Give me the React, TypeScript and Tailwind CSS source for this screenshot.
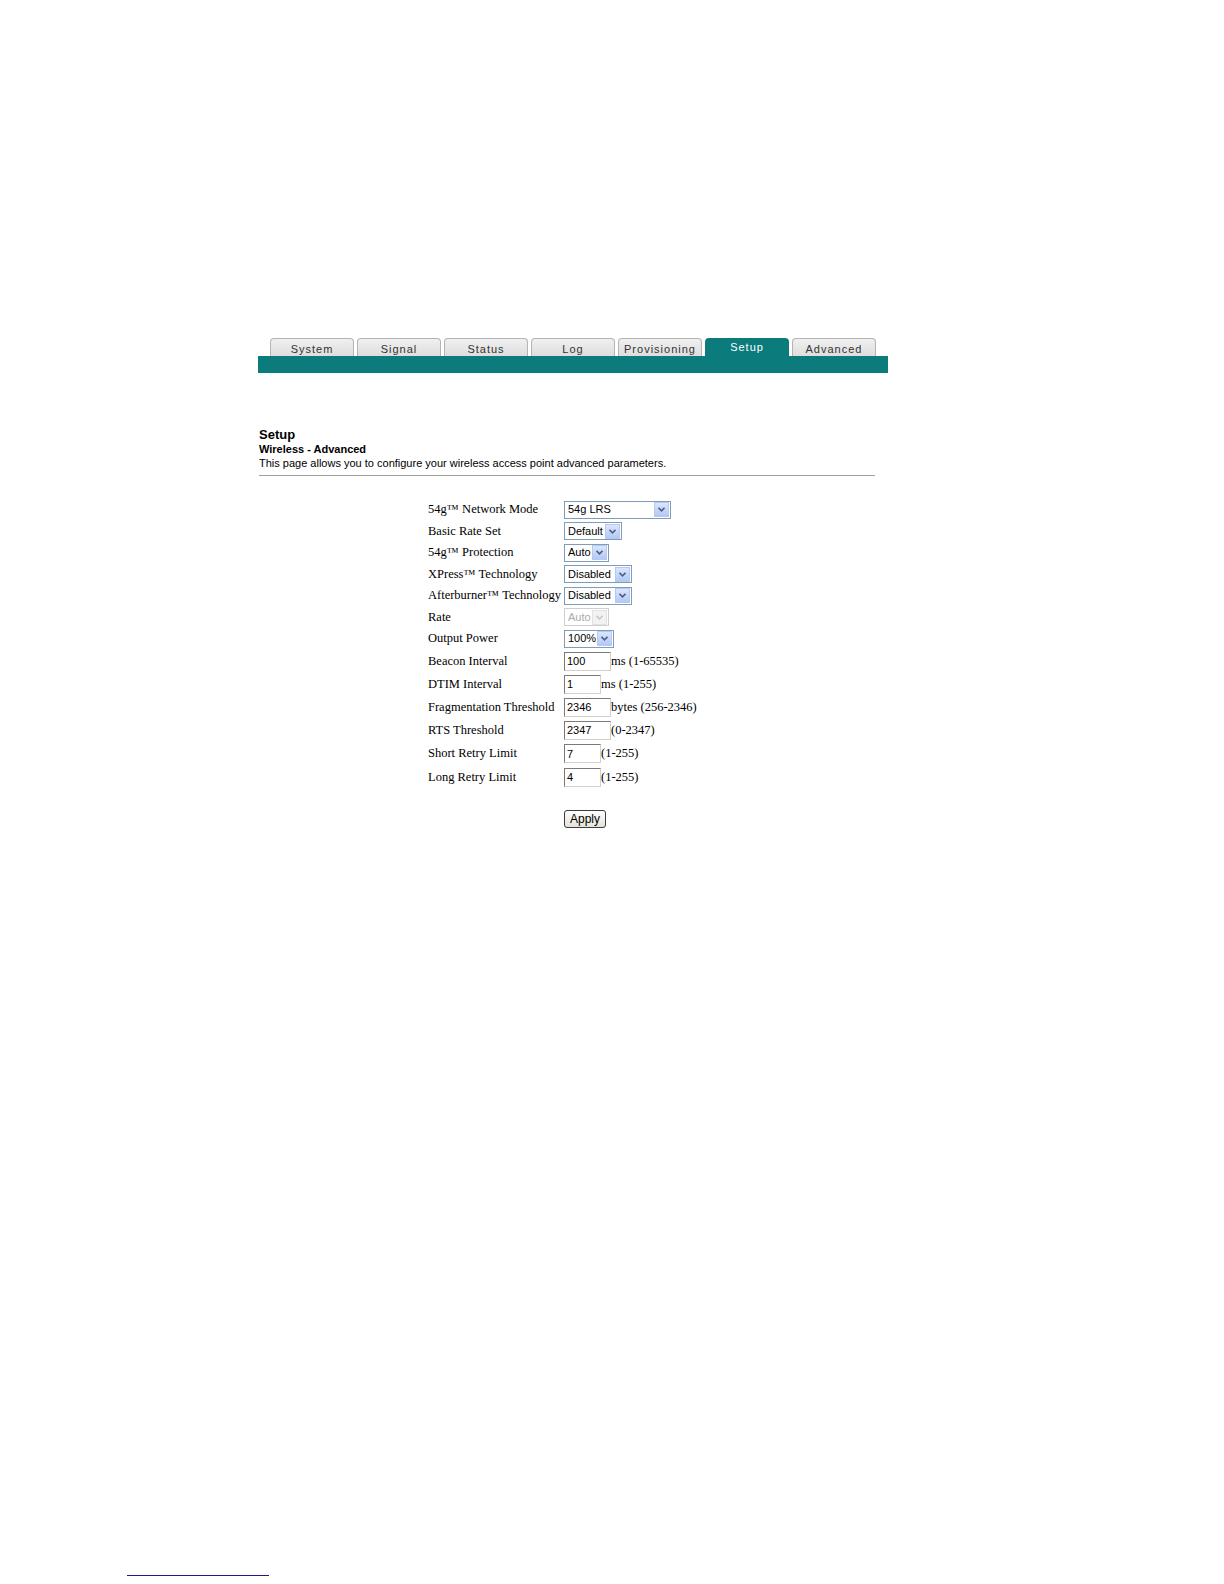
import React from 'react';

const tabs = ['System', 'Signal', 'Status', 'Log', 'Provisioning', 'Setup', 'Advanced'];

const Arrow = ({ disabled }: { disabled?: boolean }) => (
  <div
    className={`flex h-[15px] w-[15px] items-center justify-center border ${
      disabled ? 'border-[#e2e2e2] bg-[#f2f2f2]' : 'border-[#b7c9f0] bg-gradient-to-b from-[#dbe6fc] to-[#b4c8f6]'
    }`}
  >
    <svg width="7" height="5" viewBox="0 0 7 5">
      <path d="M0.5 0.8 L3.5 3.8 L6.5 0.8" fill="none" stroke={disabled ? '#c8c8c8' : '#4d6185'} strokeWidth="1.6" />
    </svg>
  </div>
);

const Select = ({ value, w, disabled }: { value: string; w: string; disabled?: boolean }) => (
  <div
    className={`flex h-[18px] items-center justify-between border pl-[3px] pr-px ${w} ${
      disabled ? 'border-[#cfcfcf] text-[#ababab]' : 'border-[#7f9db9] text-black'
    }`}
  >
    <span className="text-[11px] leading-none">{value}</span>
    <Arrow disabled={disabled} />
  </div>
);

const Input = ({ value, w, suffix }: { value: string; w: string; suffix: string }) => (
  <div className="flex items-center">
    <div
      className={`flex h-[19px] items-center border border-t-[#7a7a7a] border-l-[#7a7a7a] border-r-[#d4d0c8] border-b-[#d4d0c8] pl-[2px] text-[11px] ${w}`}
    >
      {value}
    </div>
    <span className="font-['Liberation_Serif',serif] text-[12.5px] text-black">{suffix}</span>
  </div>
);

type Row = { label: string; kind: 'select' | 'input'; value: string; w: string; suffix?: string; disabled?: boolean };

const rows: Row[] = [
  { label: '54g™ Network Mode', kind: 'select', value: '54g LRS', w: 'w-[107px]' },
  { label: 'Basic Rate Set', kind: 'select', value: 'Default', w: 'w-[58px]' },
  { label: '54g™ Protection', kind: 'select', value: 'Auto', w: 'w-[45px]' },
  { label: 'XPress™ Technology', kind: 'select', value: 'Disabled', w: 'w-[68px]' },
  { label: 'Afterburner™ Technology', kind: 'select', value: 'Disabled', w: 'w-[68px]' },
  { label: 'Rate', kind: 'select', value: 'Auto', w: 'w-[45px]', disabled: true },
  { label: 'Output Power', kind: 'select', value: '100%', w: 'w-[50px]' },
  { label: 'Beacon Interval', kind: 'input', value: '100', w: 'w-[47px]', suffix: 'ms (1-65535)' },
  { label: 'DTIM Interval', kind: 'input', value: '1', w: 'w-[37px]', suffix: 'ms (1-255)' },
  { label: 'Fragmentation Threshold', kind: 'input', value: '2346', w: 'w-[47px]', suffix: 'bytes (256-2346)' },
  { label: 'RTS Threshold', kind: 'input', value: '2347', w: 'w-[47px]', suffix: '(0-2347)' },
  { label: 'Short Retry Limit', kind: 'input', value: '7', w: 'w-[37px]', suffix: '(1-255)' },
  { label: 'Long Retry Limit', kind: 'input', value: '4', w: 'w-[37px]', suffix: '(1-255)' },
];

export default function App() {
  return (
    <div className="flex h-[1584px] w-[1224px] flex-col bg-white font-['Liberation_Sans',Arial,sans-serif] text-black">
      {/* Tab bar */}
      <div className="ml-[258px] mt-[338px] w-[630px]">
        <div className="flex gap-[3px] pl-[12px]">
          {tabs.map((t) =>
            t === 'Setup' ? (
              <div
                key={t}
                className="flex h-[18px] w-[84px] items-start justify-center rounded-t-[4px] bg-[#0b7b7b] pt-[3px] text-[11px] leading-[12px] tracking-[1px] text-white"
              >
                {t}
              </div>
            ) : (
              <div
                key={t}
                className="flex h-[18px] w-[84px] items-end justify-center rounded-t-[4px] border border-b-0 border-[#b4b4b4] bg-gradient-to-b from-[#f0f0f0] to-[#dedede] text-[11px] leading-[13px] tracking-[1px] text-[#333]"
              >
                {t}
              </div>
            )
          )}
        </div>
        <div className="h-[17px] bg-[#0b7b7b]" />
      </div>

      {/* Heading */}
      <div className="ml-[259px] mt-[54px] w-[616px]">
        <div className="text-[13px] font-bold leading-[15px]">Setup</div>
        <div className="text-[11px] font-bold leading-[14px]">Wireless - Advanced</div>
        <div className="text-[11px] leading-[14px]">This page allows you to configure your wireless access point advanced parameters.</div>
        <div className="mt-[5px] border-t border-[#a0a0a0]" />
      </div>

      {/* Form */}
      <div className="ml-[428px] mt-[23px] flex flex-col">
        {rows.map((r) => (
          <div key={r.label} className={`flex items-center ${r.kind === 'select' ? 'h-[21.5px]' : 'h-[23.2px]'}`}>
            <div className="w-[136px] whitespace-nowrap font-['Liberation_Serif',serif] text-[12.5px]">{r.label}</div>
            {r.kind === 'select' ? (
              <Select value={r.value} w={r.w} disabled={r.disabled} />
            ) : (
              <Input value={r.value} w={r.w} suffix={r.suffix ?? ''} />
            )}
          </div>
        ))}
        <div className="mt-[21px] pl-[136px]">
          <button className="flex h-[18px] w-[42px] items-center justify-center rounded-[3px] border border-[#3c3c3c] bg-gradient-to-b from-[#ffffff] to-[#e4e2d8] text-[12px] leading-none">
            Apply
          </button>
        </div>
      </div>

      {/* Footnote separator */}
      <div className="mb-[8px] ml-[127px] mt-auto h-px w-[142px] bg-[#1c1c8a]" />
    </div>
  );
}
